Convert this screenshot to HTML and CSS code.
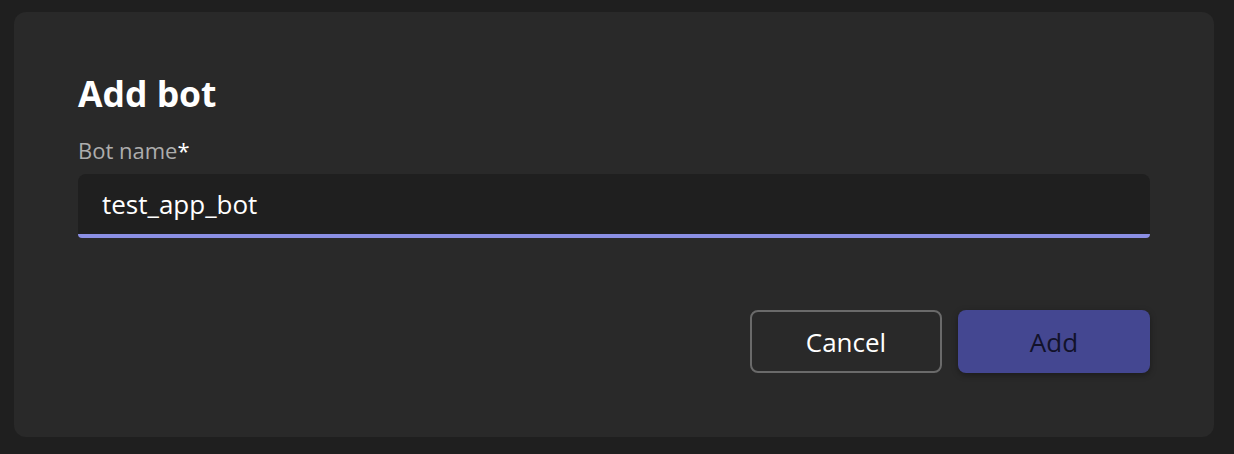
FILE: index.html
```html
<!DOCTYPE html>
<html>
<head>
<meta charset="utf-8">
<link rel="stylesheet" href="styles.css">
</head>
<body>
<div class="dialog">
  <h1 class="title">Add bot</h1>
  <label class="label">Bot name<span class="req">*</span></label>
  <div class="input"><span class="value">test_app_bot</span></div>
  <div class="actions">
    <button class="btn btn-secondary">Cancel</button>
    <button class="btn btn-primary">Add</button>
  </div>
</div>
</body>
</html>
```
FILE: styles.css
```css
html, body {
  margin: 0;
  padding: 0;
  background: #1f1f1f;
  width: 1234px;
  height: 454px;
  overflow: hidden;
}
body {
  padding: 12px 20px 17px 14px;
  box-sizing: border-box;
  font-family: "Open Sans", "Segoe UI", sans-serif;
}
.dialog {
  background: #292929;
  border-radius: 12px;
  height: 425px;
  box-sizing: border-box;
  padding: 59px 64px 0 64px;
  display: flex;
  flex-direction: column;
}
.title {
  margin: 0;
  color: #ffffff;
  font-size: 35.5px;
  font-weight: 700;
  line-height: 44px;
}
.label {
  margin-top: 22px;
  color: #adadad;
  font-size: 22px;
  line-height: 26px;
}
.req {
  color: #ffffff;
}
.input {
  margin-top: 11px;
  height: 64px;
  box-sizing: border-box;
  background: #1f1f1f;
  border-radius: 8px 8px 4px 4px;
  border-bottom: 4px solid #8b8fe4;
  display: flex;
  align-items: center;
  padding: 0 24px;
}
.value {
  color: #ffffff;
  font-size: 26px;
}
.actions {
  display: flex;
  justify-content: flex-end;
  gap: 16px;
  margin-top: 72px;
}
.btn {
  width: 192px;
  height: 63px;
  border-radius: 8px;
  font-family: inherit;
  font-size: 26px;
  box-sizing: border-box;
}
.btn-secondary {
  background: #292929;
  border: 2px solid #6a6a6a;
  color: #ffffff;
}
.btn-primary {
  background: #444791;
  border: none;
  color: #12122a;
  box-shadow: 0 2px 6px rgba(0,0,0,0.35);
}
```
